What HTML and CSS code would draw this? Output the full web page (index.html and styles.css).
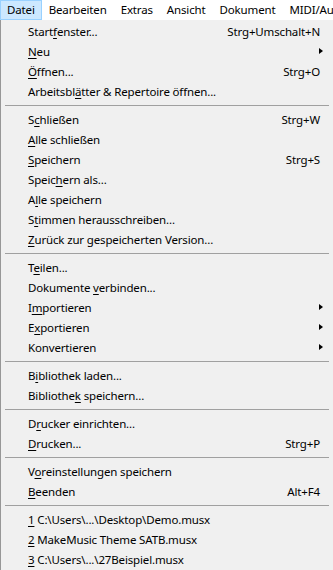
FILE: index.html
```html
<!DOCTYPE html>
<html lang="de">
<head>
<meta charset="utf-8">
<link rel="stylesheet" href="styles.css">
</head>
<body>
<div class="menubar">
  <div class="mb-item active">Datei</div>
  <div class="mb-item">Bearbeiten</div>
  <div class="mb-item">Extras</div>
  <div class="mb-item">Ansicht</div>
  <div class="mb-item">Dokument</div>
  <div class="mb-item">MIDI/Audio</div>
</div>
<div class="menu">
  <div class="item"><span class="label">Start<u>f</u>enster...</span><span class="key">Strg+Umschalt+N</span></div>
  <div class="item"><span class="label"><u>N</u>eu</span><span class="arrow"></span></div>
  <div class="item"><span class="label"><u>Ö</u>ffnen...</span><span class="key">Strg+O</span></div>
  <div class="item"><span class="label">Arbeitsbl<u>ä</u>tter &amp; Repertoire öffnen...</span></div>
  <div class="sep"></div>
  <div class="item"><span class="label">S<u>c</u>hließen</span><span class="key">Strg+W</span></div>
  <div class="item"><span class="label"><u>A</u>lle schließen</span></div>
  <div class="item"><span class="label"><u>S</u>peichern</span><span class="key">Strg+S</span></div>
  <div class="item"><span class="label">Speic<u>h</u>ern als...</span></div>
  <div class="item"><span class="label">A<u>l</u>le speichern</span></div>
  <div class="item"><span class="label">S<u>t</u>immen herausschreiben...</span></div>
  <div class="item"><span class="label"><u>Z</u>urück zur gespeicherten Version...</span></div>
  <div class="sep"></div>
  <div class="item"><span class="label">T<u>e</u>ilen...</span></div>
  <div class="item"><span class="label">Dokumente <u>v</u>erbinden...</span></div>
  <div class="item"><span class="label">I<u>m</u>portieren</span><span class="arrow"></span></div>
  <div class="item"><span class="label">E<u>x</u>portieren</span><span class="arrow"></span></div>
  <div class="item"><span class="label">Konvertieren</span><span class="arrow"></span></div>
  <div class="sep"></div>
  <div class="item"><span class="label">B<u>i</u>bliothek laden...</span></div>
  <div class="item"><span class="label">Bibliothe<u>k</u> speichern...</span></div>
  <div class="sep"></div>
  <div class="item"><span class="label">D<u>r</u>ucker einrichten...</span></div>
  <div class="item"><span class="label"><u>D</u>rucken...</span><span class="key">Strg+P</span></div>
  <div class="sep"></div>
  <div class="item"><span class="label">V<u>o</u>reinstellungen speichern</span></div>
  <div class="item"><span class="label"><u>B</u>eenden</span><span class="key">Alt+F4</span></div>
  <div class="sep"></div>
  <div class="item"><span class="label"><u>1</u> C:\Users\...\Desktop\Demo.musx</span></div>
  <div class="item"><span class="label"><u>2</u> MakeMusic Theme SATB.musx</span></div>
  <div class="item"><span class="label"><u>3</u> C:\Users\...\27Beispiel.musx</span></div>
</div>
</body>
</html>
```
FILE: styles.css
```css
html, body {
  margin: 0;
  padding: 0;
  width: 333px;
  height: 570px;
  overflow: hidden;
  background: #f0f0f0;
  font-family: "Noto Sans", "DejaVu Sans", sans-serif;
  font-size: 11.5px;
  letter-spacing: -0.15px;
  color: #000;
}

.menubar {
  display: flex;
  height: 20px;
  background: #ffffff;
  white-space: nowrap;
  overflow: hidden;
}

.mb-item {
  flex: none;
  padding: 0 6px;
  border: 1px solid transparent;
  line-height: 18px;
}

.mb-item.active {
  background: #cce8ff;
  border-color: #99d1ff;
}

.menu {
  border-left: 1px solid #979797;
  padding-top: 1px;
  background: #f0f0f0;
  height: 549px;
}

.item {
  display: flex;
  align-items: center;
  height: 20px;
  padding: 0 13px 0 27px;
  white-space: nowrap;
}

.label {
  flex: 1;
}

.item u {
  text-decoration-thickness: 1px;
  text-underline-offset: 2px;
}

.key {
  flex: none;
}

.arrow {
  flex: none;
  width: 0;
  height: 0;
  margin-right: -3px;
  border-top: 3.5px solid transparent;
  border-bottom: 3.5px solid transparent;
  border-left: 4px solid #000;
}

.sep {
  height: 8px;
  display: flex;
  align-items: center;
  padding-left: 4px;
  padding-right: 4px;
}

.sep::before {
  content: "";
  flex: 1;
  height: 1px;
  background: #a0a0a0;
}
```
